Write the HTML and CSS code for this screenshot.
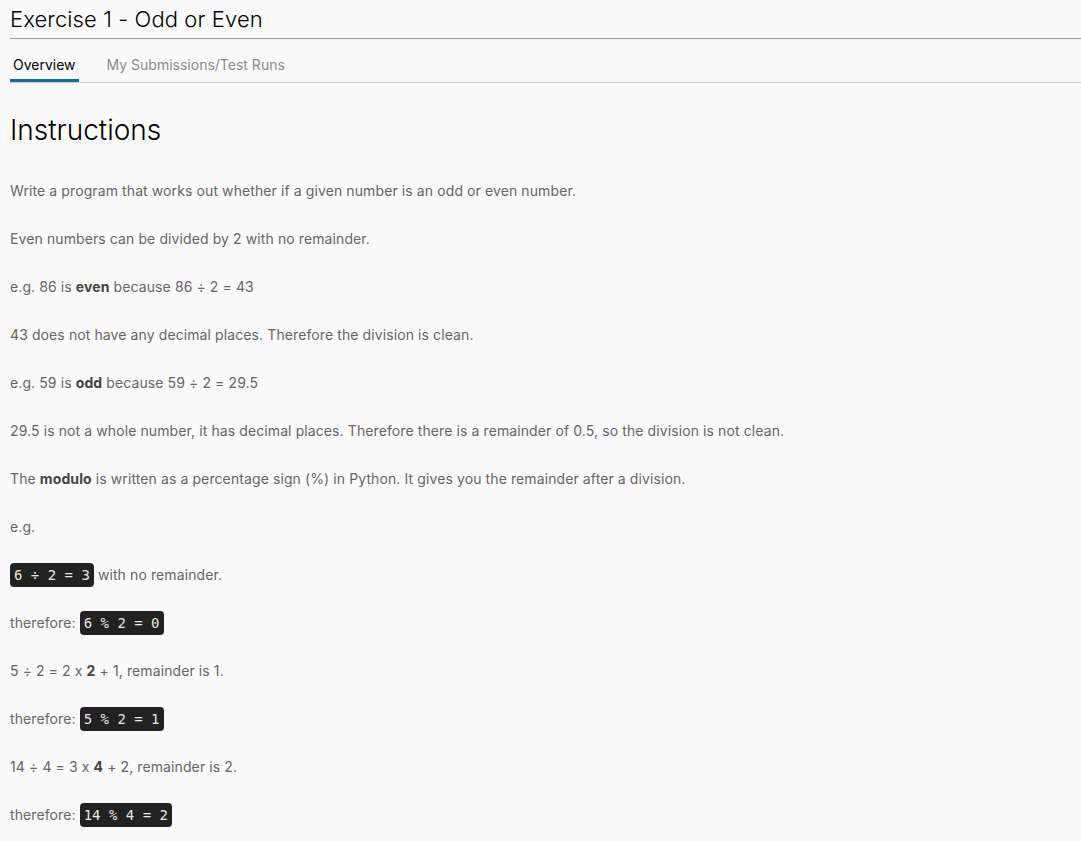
FILE: index.html
```html
<!DOCTYPE html>
<html>
<head>
<meta charset="utf-8">
<link rel="stylesheet" href="styles.css">
</head>
<body>
<div class="page">
  <h1 class="title">Exercise 1 - Odd or Even</h1>
  <nav class="tabs">
    <a class="tab active">Overview</a>
    <a class="tab">My Submissions/Test Runs</a>
  </nav>
  <div class="content">
    <h2 class="heading">Instructions</h2>
    <p>Write a program that works out whether if a given number is an odd or even number.</p>
    <p>Even numbers can be divided by 2 with no remainder.</p>
    <p>e.g. 86 is <strong>even</strong> because 86 ÷ 2 = 43</p>
    <p>43 does not have any decimal places. Therefore the division is clean.</p>
    <p>e.g. 59 is <strong>odd</strong> because 59 ÷ 2 = 29.5</p>
    <p>29.5 is not a whole number, it has decimal places. Therefore there is a remainder of 0.5, so the division is not clean.</p>
    <p>The <strong>modulo</strong> is written as a percentage sign (%) in Python. It gives you the remainder after a division.</p>
    <p>e.g.</p>
    <p><code>6 ÷ 2 = 3</code> with no remainder.</p>
    <p>therefore: <code>6 % 2 = 0</code></p>
    <p>5 ÷ 2 = 2 x <strong>2</strong> + 1, remainder is 1.</p>
    <p>therefore: <code>5 % 2 = 1</code></p>
    <p>14 ÷ 4 = 3 x <strong>4</strong> + 2, remainder is 2.</p>
    <p>therefore: <code>14 % 4 = 2</code></p>
  </div>
</div>
</body>
</html>
```

FILE: styles.css
```css
html, body {
  margin: 0;
  padding: 0;
  background: #fafafa;
}
body {
  font-family: "Inter", "Open Sans", sans-serif;
  overflow: hidden;
}
.page {
  padding-left: 10px;
}
.title {
  margin: 0;
  padding-top: 6px;
  height: 32px;
  font-size: 22px;
  font-weight: 300;
  line-height: 26px;
  letter-spacing: 0.1px;
  color: #000;
  border-bottom: 1px solid #9a9a9a;
}
.tabs {
  display: flex;
  gap: 25px;
  height: 43px;
  border-bottom: 1px solid #cccccc;
}
.tab {
  display: flex;
  align-items: center;
  padding: 0 3px;
  font-size: 14px;
  color: #8c8c8c;
  box-sizing: border-box;
  padding-top: 10px;
  border-bottom: 3px solid transparent;
}
.tab.active {
  color: #000;
  border-bottom-color: #1a6e8e;
}
.content {
  padding-top: 29px;
}
.heading {
  margin: 0 0 31px 0;
  font-size: 28px;
  font-weight: 300;
  line-height: 36px;
  color: #000;
}
.content p {
  margin: 0 0 24px 0;
  font-size: 14px;
  line-height: 24px;
  letter-spacing: 0.1px;
  color: #666;
}
.content strong {
  color: #444;
  font-weight: 700;
}
code {
  font-family: "DejaVu Sans Mono", monospace;
  font-size: 14px;
  letter-spacing: 0;
  background: #222220;
  color: #e8e8e8;
  padding: 4px 4px;
  border-radius: 4px;
}
```
